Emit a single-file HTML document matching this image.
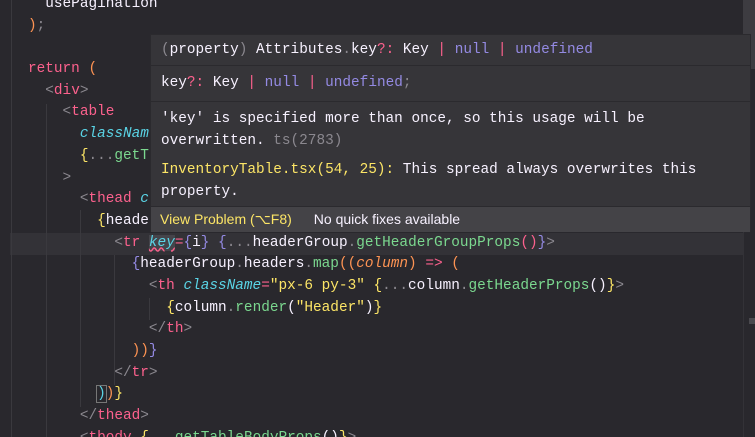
<!DOCTYPE html>
<html style="width:755px;height:437px;overflow:hidden"><head><meta charset="utf-8"><style>
*{margin:0;padding:0;box-sizing:border-box}
body{width:755px;height:437px;overflow:hidden;background:#29282d;position:relative;font-family:"Liberation Mono",monospace;font-size:14.4px;color:#f7f1ff}
.code{position:absolute;left:28px;top:-6px;line-height:21.7px}
.l{height:21.7px;white-space:pre}
.hl{position:absolute;left:10px;top:233px;width:733px;height:22px;background:#333237}
.g{color:#8b888f}.p{color:#fc618d}.o{color:#fd9353}.c{color:#5ad4e6;font-style:italic}.y{color:#fce566}.gr{color:#7bd88f}.pu{color:#948ae3}.w{color:#f7f1ff}
.guide{position:absolute;width:1px;background:#3a393e}
.tip{position:absolute;left:150px;top:34px;width:601px;height:198px;background:#363539;border:1px solid #2b2a2e}
.row{position:absolute;left:0;width:100%;border-bottom:1px solid #2b2a2e;padding-left:10px;white-space:pre}
.sb{position:absolute;left:0;top:171px;width:100%;height:26px;background:#444347;border-top:1px solid #2b2a2e;font-family:"Liberation Sans",sans-serif;font-size:14px;line-height:25px;padding-left:9px}
</style></head><body>
<div class="hl"></div>
<div style="position:absolute;left:743px;top:0;width:12px;height:69px;background:#3d3c41"></div>
<div style="position:absolute;left:743px;top:69px;width:1px;height:368px;background:#333237"></div>
<div style="position:absolute;left:749px;top:318px;width:6px;height:6px;background:#4a494e"></div>
<div class="guide" style="left:11px;top:0;height:437px"></div>
<div class="guide" style="left:46px;top:104px;height:333px"></div>
<div class="guide" style="left:80px;top:210px;height:197px"></div>
<div class="guide" style="left:114px;top:255px;height:130px"></div>
<div class="guide" style="left:149px;top:298px;height:22px"></div>
<div class="code"><div class="l">  usePagination</div><div class="l"><span class="o">)</span><span class="g">;</span></div><div class="l"> </div><div class="l"><span class="p">return</span> <span class="o">(</span></div><div class="l">  <span class="g">&lt;</span><span class="p">div</span><span class="g">&gt;</span></div><div class="l">    <span class="g">&lt;</span><span class="p">table</span></div><div class="l">      <span class="c">classNam</span></div><div class="l">      <span class="y">{</span><span class="g">...</span><span class="gr">getT</span></div><div class="l">    <span class="g">&gt;</span></div><div class="l">      <span class="g">&lt;</span><span class="p">thead</span> <span class="c">c</span></div><div class="l">        <span class="y">{</span>heade</div><div class="l">          <span class="g">&lt;</span><span class="p">tr</span> <span class="c" style="text-decoration:underline wavy #fc618d;background:#45444a">key</span><span class="p">=</span><span class="pu">{</span>i<span class="pu">}</span> <span class="pu">{</span><span class="g">...</span>headerGroup<span class="g">.</span><span class="gr">getHeaderGroupProps</span><span class="p">()</span><span class="pu">}</span><span class="g">&gt;</span></div><div class="l">            <span class="pu">{</span>headerGroup<span class="g">.</span>headers<span class="g">.</span><span class="gr">map</span><span class="o">((</span><span class="o" style="font-style:italic">column</span><span class="o">)</span> <span class="p">=&gt;</span> <span class="o">(</span></div><div class="l">              <span class="g">&lt;</span><span class="p">th</span> <span class="c">className</span><span class="p">=</span><span class="y">"px-6 py-3"</span> <span class="y">{</span><span class="g">...</span>column<span class="g">.</span><span class="gr">getHeaderProps</span><span class="w">()</span><span class="y">}</span><span class="g">&gt;</span></div><div class="l">                <span class="y">{</span>column<span class="g">.</span><span class="gr">render</span><span class="w">(</span><span class="y">"Header"</span><span class="w">)</span><span class="y">}</span></div><div class="l">              <span class="g">&lt;/</span><span class="p">th</span><span class="g">&gt;</span></div><div class="l">            <span class="o">))</span><span class="pu">}</span></div><div class="l">          <span class="g">&lt;/</span><span class="p">tr</span><span class="g">&gt;</span></div><div class="l">        <span class="c" style="font-style:normal;outline:1px solid #777">)</span><span class="o">)</span><span class="y">}</span></div><div class="l">      <span class="g">&lt;/</span><span class="p">thead</span><span class="g">&gt;</span></div><div class="l">      <span class="g">&lt;</span><span class="p">tbody</span> <span class="y">{</span><span class="g">...</span><span class="gr">getTableBodyProps</span><span class="w">()</span><span class="y">}</span><span class="g">&gt;</span></div></div>
<div class="tip">
<div class="row" style="top:0;height:31px;line-height:30px"><span class="g">(</span>property<span class="g">)</span> Attributes<span class="g">.</span>key<span class="p">?:</span> Key <span class="p">|</span> <span class="pu">null</span> <span class="p">|</span> <span class="pu">undefined</span></div>
<div class="row" style="top:31px;height:36px;line-height:35px">key<span class="p">?:</span> Key <span class="p">|</span> <span class="pu">null</span> <span class="p">|</span> <span class="pu">undefined</span><span class="g">;</span></div>
<div class="row" style="top:67px;height:104px;border:none;line-height:21.5px;padding-top:7px;white-space:normal">'key' is specified more than once, so this usage will be overwritten. <span class="g">ts(2783)</span><div style="height:8px"></div><span class="y">InventoryTable.tsx(54, 25):</span> This spread always overwrites this property.</div>
<div class="sb"><span class="y">View Problem (⌥F8)</span><span style="margin-left:22px">No quick fixes available</span></div>
</div>
</body></html>
